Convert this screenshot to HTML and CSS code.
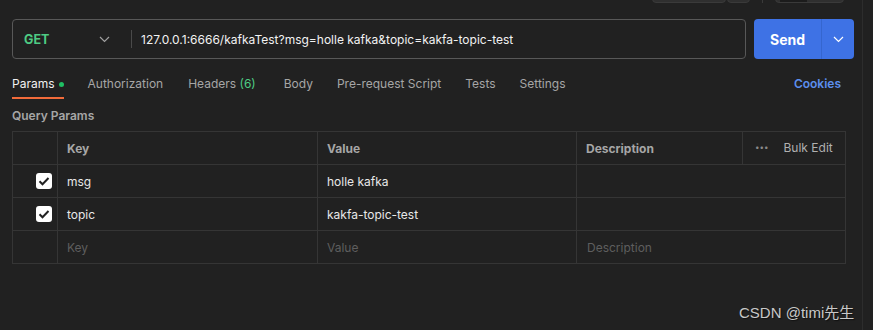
FILE: index.html
```html
<!DOCTYPE html>
<html>
<head>
<meta charset="utf-8">
<link rel="stylesheet" href="styles.css">
</head>
<body>
<div class="page">
  <div class="main">
    <div class="topstrip">
      <div class="tb tb-a"></div>
      <div class="tb tb-b"></div>
      <div class="tb-sep"></div>
      <div class="tb tb-c"><span class="tb-inner"></span></div>
    </div>
    <div class="reqrow">
      <div class="urlbox">
        <div class="method">
          <span class="method-name">GET</span>
          <svg class="chev" width="11" height="7" viewBox="0 0 11 7"><path d="M1 1l4.5 4.5L10 1" fill="none" stroke="#a0a0a0" stroke-width="1.2"/></svg>
        </div>
        <div class="url-sep"></div>
        <div class="url">127.0.0.1:6666/kafkaTest?msg=holle kafka&amp;topic=kakfa-topic-test</div>
      </div>
      <div class="send">
        <div class="send-label">Send</div>
        <div class="send-drop"><svg width="11" height="7" viewBox="0 0 11 7"><path d="M1 1l4.5 4.5L10 1" fill="none" stroke="#ffffff" stroke-width="1.2"/></svg></div>
      </div>
    </div>
    <div class="tabs">
      <div class="tab active">Params<span class="dot"></span></div>
      <div class="tab">Authorization</div>
      <div class="tab tab-headers">Headers <span class="green">(6)</span></div>
      <div class="tab">Body</div>
      <div class="tab">Pre-request Script</div>
      <div class="tab">Tests</div>
      <div class="tab">Settings</div>
      <div class="tab cookies">Cookies</div>
    </div>
    <div class="section-title">Query Params</div>
    <div class="table">
      <div class="row head">
        <div class="c c-chk"></div>
        <div class="c c-key">Key</div>
        <div class="c c-val">Value</div>
        <div class="c c-desc">Description</div>
        <div class="c c-bulk"><span class="dots">•••</span><span class="bulk">Bulk Edit</span></div>
      </div>
      <div class="row">
        <div class="c c-chk"><span class="checkbox"><svg width="12" height="10" viewBox="0 0 12 10"><path d="M1.5 5.2l3 3L10.5 2" fill="none" stroke="#212121" stroke-width="2"/></svg></span></div>
        <div class="c c-key">msg</div>
        <div class="c c-val">holle kafka</div>
        <div class="c c-descw"></div>
      </div>
      <div class="row">
        <div class="c c-chk"><span class="checkbox"><svg width="12" height="10" viewBox="0 0 12 10"><path d="M1.5 5.2l3 3L10.5 2" fill="none" stroke="#212121" stroke-width="2"/></svg></span></div>
        <div class="c c-key">topic</div>
        <div class="c c-val">kakfa-topic-test</div>
        <div class="c c-descw"></div>
      </div>
      <div class="row last">
        <div class="c c-chk"></div>
        <div class="c c-key ph">Key</div>
        <div class="c c-val ph">Value</div>
        <div class="c c-descw ph">Description</div>
      </div>
    </div>
    <div class="watermark">CSDN @timi先生</div>
  </div>
  <div class="side"></div>
</div>
</body>
</html>
```
FILE: styles.css
```css
html, body {
  margin: 0;
  padding: 0;
  background: #212121;
  height: 330px;
  overflow: hidden;
}
body {
  font-family: Inter, "Noto Sans", sans-serif;
  color: #e6e6e6;
}
.page {
  display: flex;
  height: 330px;
}
.main {
  width: 862px;
  border-right: 1px solid #2d2d2d;
  position: relative;
  display: flex;
  flex-direction: column;
}
.side {
  flex: 1;
}
.topstrip {
  height: 3px;
  overflow: hidden;
  display: flex;
  align-items: flex-end;
  padding-left: 652px;
}
.tb {
  height: 20px;
  background: #2f2f2f;
  border: 1px solid #3a3a3a;
  border-radius: 4px;
  box-sizing: border-box;
}
.tb-a { width: 74px; }
.tb-b { width: 23px; margin-left: 1px; }
.tb-sep { width: 1px; height: 20px; background: #3a3a3a; margin-left: 12px; }
.tb-c { width: 69px; margin-left: 12px; display: flex; align-items: flex-end; padding-left: 4px; }
.tb-inner { width: 27px; height: 3px; background: #1c1c1c; }

.reqrow {
  display: flex;
  margin-top: 16px;
  padding-left: 12px;
  height: 40px;
}
.urlbox {
  width: 734px;
  box-sizing: border-box;
  border: 1px solid #585858;
  border-radius: 4px;
  display: flex;
  align-items: center;
}
.method {
  width: 118px;
  display: flex;
  align-items: center;
  justify-content: space-between;
  padding-left: 11px;
  padding-right: 21px;
  box-sizing: border-box;
}
.method-name {
  color: #4ecb83;
  font-weight: 700;
  font-size: 12.5px;
}
.chev { display: block; }
.url-sep {
  width: 1px;
  height: 18px;
  background: #4a4a4a;
}
.url {
  padding-left: 9px;
  font-size: 12px;
  color: #f2f2f2;
  white-space: nowrap;
}
.send {
  margin-left: 8px;
  width: 100px;
  background: #3e72e5;
  border-radius: 4px;
  display: flex;
  color: #fff;
}
.send-label {
  width: 67px;
  display: flex;
  align-items: center;
  justify-content: center;
  font-weight: 700;
  font-size: 14px;
  border-right: 1px solid #3566cf;
}
.send-drop {
  flex: 1;
  display: flex;
  align-items: center;
  justify-content: center;
}
.send-drop svg { display: block; }

.tabs {
  display: flex;
  padding-left: 12px;
  padding-right: 21px;
  padding-top: 2px;
  margin-top: 14px;
  height: 26px;
  font-size: 12px;
  color: #a6a6a6;
}
.tab {
  margin-right: 24px;
  line-height: 18px;
  white-space: nowrap;
}
.tab-headers { margin-left: 1px; margin-right: 28px; }
.tab.active {
  color: #f0f0f0;
  border-bottom: 2px solid #f26b3a;
  height: 22px;
  display: flex;
  align-items: flex-start;
}
.dot {
  display: inline-block;
  width: 5px;
  height: 5px;
  border-radius: 50%;
  background: #1fbf63;
  margin-left: 4px;
  margin-top: 7px;
}
.green { color: #4ecb83; }
.cookies {
  margin-left: auto;
  margin-right: 0;
  color: #5c8fee;
  font-weight: 600;
}
.section-title {
  margin-top: 6px;
  padding-left: 12px;
  font-size: 12px;
  font-weight: 600;
  color: #a6a6a6;
  line-height: 18px;
}
.table {
  margin-top: 6px;
  margin-left: 12px;
  width: 834px;
  border: 1px solid #353535;
  box-sizing: border-box;
}
.row {
  display: flex;
  height: 33px;
  border-bottom: 1px solid #353535;
  box-sizing: border-box;
  font-size: 12px;
  color: #e8e8e8;
}
.row.last { border-bottom: none; height: 32px; }
.c {
  display: flex;
  align-items: center;
  box-sizing: border-box;
  border-right: 1px solid #353535;
  white-space: nowrap;
}
.c-chk { width: 45px; justify-content: flex-end; padding-right: 5px; }
.c-key { width: 260px; padding-left: 9px; }
.c-val { width: 259px; padding-left: 9px; }
.c-desc { width: 166px; padding-left: 9px; }
.c-descw { flex: 1; border-right: none; padding-left: 10px; }
.c-bulk { flex: 1; border-right: none; padding-left: 12px; color: #b0b0b0; }
.head { color: #a6a6a6; font-weight: 700; font-size: 12px; }
.head .c-bulk { font-weight: 400; font-size: 12px; padding-bottom: 2px; }
.dots { font-size: 8px; letter-spacing: 0px; color: #8a8a8a; margin-right: 15px; }
.checkbox {
  width: 16px;
  height: 16px;
  background: #ffffff;
  border-radius: 3px;
  display: flex;
  align-items: center;
  justify-content: center;
}
.checkbox svg { display: block; }
.ph { color: #5e5e5e; }
.watermark {
  position: absolute;
  left: 739px;
  top: 301px;
  font-family: "Liberation Sans", "Noto Sans CJK SC", sans-serif;
  font-size: 15px;
  color: #c8c8c8;
  text-shadow: 1px 1px 1px #111;
  white-space: nowrap;
}
```
